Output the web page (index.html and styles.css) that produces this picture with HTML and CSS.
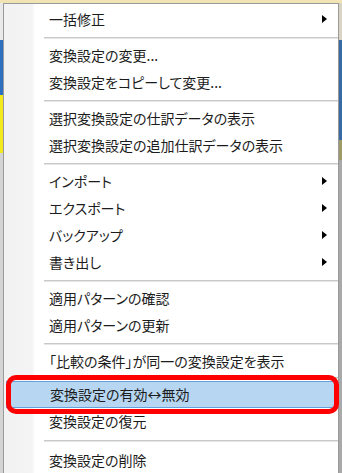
FILE: index.html
```html
<!DOCTYPE html>
<html lang="ja">
<head>
<meta charset="utf-8">
<link rel="stylesheet" href="styles.css">
</head>
<body>
<div class="screen">
  <div class="topbar"></div>
  <div class="row">
    <div class="edge edge-left">
      <i class="seg seg-light"></i>
      <i class="seg seg-blue"></i>
      <i class="seg seg-yellow"></i>
      <i class="seg seg-gray"></i>
    </div>
    <div class="menu">
      <div class="item sub">一括修正</div>
      <div class="sep"></div>
      <div class="item">変換設定の変更...</div>
      <div class="item">変換設定をコピーして変更...</div>
      <div class="sep"></div>
      <div class="item">選択変換設定の仕訳データの表示</div>
      <div class="item">選択変換設定の追加仕訳データの表示</div>
      <div class="sep"></div>
      <div class="item sub">インポート</div>
      <div class="item sub">エクスポート</div>
      <div class="item sub">バックアップ</div>
      <div class="item sub">書き出し</div>
      <div class="sep"></div>
      <div class="item">適用パターンの確認</div>
      <div class="item">適用パターンの更新</div>
      <div class="sep"></div>
      <div class="item">「比較の条件」が同一の変換設定を表示</div>
      <div class="sep sep-short"></div>
      <div class="item active">変換設定の有効↔無効</div>
      <div class="item">変換設定の復元</div>
      <div class="sep sep-tall"></div>
      <div class="item">変換設定の削除</div>
      <div class="item">&nbsp;</div>
    </div>
    <div class="edge edge-right">
      <i class="seg seg-rlight"></i>
      <i class="seg seg-rblue"></i>
      <i class="seg seg-rolive"></i>
      <i class="seg seg-rgray"></i>
    </div>
  </div>
</div>
</body>
</html>
```

FILE: styles.css
```css
html, body {
  margin: 0;
  padding: 0;
  background: #ffffff;
  overflow: hidden;
}

.screen {
  width: 342px;
  height: 473px;
  overflow: hidden;
  display: flex;
  flex-direction: column;
  font-family: "Noto Sans CJK JP", "Noto Sans", sans-serif;
  font-feature-settings: "palt";
  font-size: 14px;
  color: #1c1c1c;
}

.topbar {
  height: 3px;
  flex: none;
  background: #f1e4b4;
}

.row {
  display: flex;
  flex: 1;
  min-height: 0;
}

.edge {
  width: 3px;
  flex: none;
  display: flex;
  flex-direction: column;
}

.seg { display: block; flex: none; }
.seg-light { height: 37px; background: #e9e9e9; }
.seg-blue { height: 55px; background: #2f6fbf; }
.seg-yellow { height: 58px; background: #f3ea1a; }
.seg-gray { flex: 1; background: #d4d4d4; }

.seg-rlight { height: 37px; background: #d8d4c4; }
.seg-rblue { height: 100px; background: #3a6aa4; }
.seg-rolive { height: 20px; background: #9e9a6a; }
.seg-rgray { flex: 1; background: #a9a9a9; }

.menu {
  flex: 1;
  border: 1px solid #9a9a9a;
  border-bottom: none;
  padding-top: 2px;
  background: linear-gradient(to right, #f2f2f2 0, #f4f4f4 28px, #ffffff 31px);
  display: flex;
  flex-direction: column;
}

.item {
  position: relative;
  height: 27px;
  line-height: 27px;
  padding-left: 45px;
  white-space: nowrap;
  flex: none;
}

.item.sub::after {
  content: "";
  position: absolute;
  right: 11px;
  top: 9px;
  border-left: 5px solid #000;
  border-top: 4.5px solid transparent;
  border-bottom: 4.5px solid transparent;
}

.sep {
  height: 9px;
  flex: none;
  display: flex;
  align-items: center;
  padding-left: 40px;
}

.sep::before {
  content: "";
  flex: 1;
  height: 1px;
  border-bottom: 1px solid #e6e6e6;
  background: #c9c9c9;
}

.sep-short { height: 6px; }
.sep-tall { height: 12px; }

.item.active {
  margin: 0 1px 0 2px;
  padding-left: 43px;
  height: 25px;
  line-height: 25px;
  background: #b6d6f1;
  border: 1px solid #64a2de;
}

.item.active::after {
  content: "";
  position: absolute;
  left: -1px;
  right: -3px;
  top: -7px;
  bottom: -7px;
  border: 5px solid #ff0000;
  border-radius: 10px;
}
```
